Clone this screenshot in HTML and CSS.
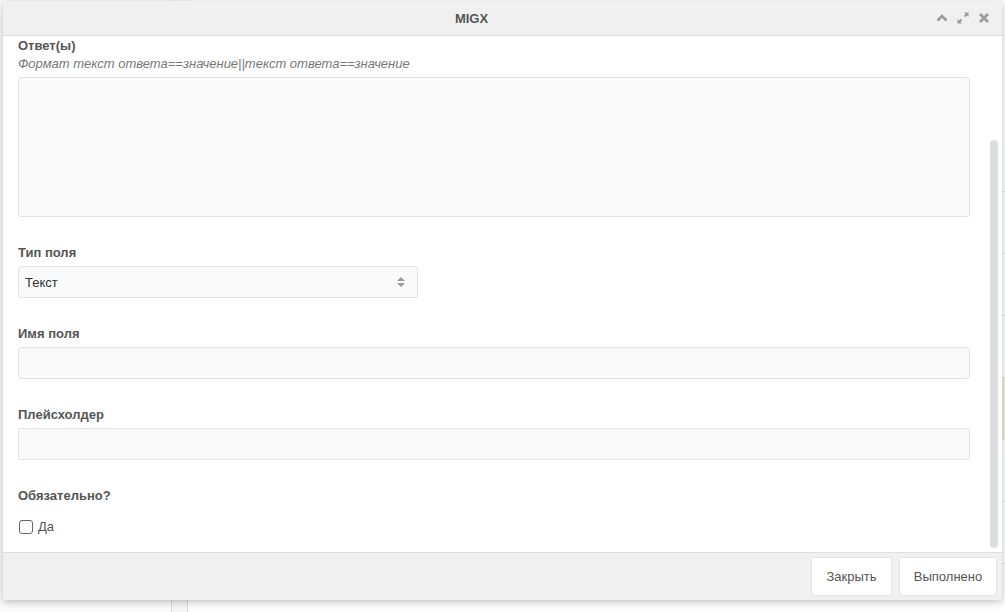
FILE: index.html
```html
<!DOCTYPE html>
<html lang="ru">
  <head>
    <meta charset="UTF-8" />
    <meta name="viewport" content="width=device-width, initial-scale=1.0" />
    <title>MIGX</title>
    <link rel="stylesheet" href="styles.css">
  </head>
  <body>
    <div class="page-behind">
      <div class="col col-left"></div>
      <div class="col col-mid"></div>
      <div class="col col-main">
        <div class="row"></div>
        <div class="row"></div>
        <div class="row"></div>
        <div class="row"></div>
        <div class="row row-hl"></div>
        <div class="row"></div>
        <div class="row"></div>
        <div class="row"></div>
      </div>
    </div>

    <div class="window">
      <div class="window-header">
        <span class="window-title">MIGX</span>
        <div class="window-tools">
          <svg width="14" height="14" viewBox="0 0 14 14">
            <path d="M2.5 9.5 L7 5 L11.5 9.5" fill="none" stroke="#9a9a9a" stroke-width="2.6" />
          </svg>
          <svg width="14" height="14" viewBox="0 0 14 14">
            <path d="M8 1.5 H12.5 V6 Z M6 12.5 H1.5 V8 Z" fill="#9a9a9a" />
            <path d="M11 3 L8.5 5.5 M3 11 L5.5 8.5" stroke="#9a9a9a" stroke-width="1.8" />
          </svg>
          <svg width="14" height="14" viewBox="0 0 14 14">
            <path d="M3 3 L11 11 M11 3 L3 11" stroke="#9a9a9a" stroke-width="2.8" />
          </svg>
        </div>
      </div>

      <div class="window-body">
        <div class="field">
          <label class="field-label">Ответ(ы)</label>
          <div class="field-help">Формат текст ответа==значение||текст ответа==значение</div>
          <textarea class="input textarea" aria-label="Ответ(ы)"></textarea>
        </div>

        <div class="field">
          <label class="field-label">Тип поля</label>
          <div class="input select">
            <span>Текст</span>
            <svg width="10" height="14" viewBox="0 0 10 14">
              <path d="M1 6 L5 2 L9 6 Z M1 8 L5 12 L9 8 Z" fill="#9a9a9a" />
            </svg>
          </div>
        </div>

        <div class="field">
          <label class="field-label">Имя поля</label>
          <input class="input" type="text" aria-label="Имя поля" />
        </div>

        <div class="field">
          <label class="field-label">Плейсхолдер</label>
          <input class="input" type="text" aria-label="Плейсхолдер" />
        </div>

        <div class="field">
          <label class="field-label">Обязательно?</label>
          <div class="check">
            <span class="check-box"></span>
            <span>Да</span>
          </div>
        </div>

        <div class="scroll-thumb"></div>
      </div>

      <div class="window-footer">
        <button class="btn btn-close">Закрыть</button>
        <button class="btn btn-ok">Выполнено</button>
      </div>
    </div>
  </body>
</html>
```

FILE: styles.css
```css
* {
  box-sizing: border-box;
  font-family: "Liberation Sans", Arial, sans-serif;
}

html,
body {
  margin: 0;
  padding: 0;
  height: 100vh;
  overflow: hidden;
  background: #f4f4f4;
  position: relative;
}

.page-behind {
  display: flex;
  height: 100%;
}

.col {
  height: 100%;
}

.col-left {
  width: 172px;
  background: #fbfbfb;
  border-right: 1px solid #dcdcdc;
}

.col-mid {
  width: 16px;
  background: #f6f6f6;
  border-right: 1px solid #dcdcdc;
}

.col-main {
  flex: 1;
  background: #fff;
  padding-top: 130px;
}

.row {
  height: 62px;
  border-bottom: 1px solid #e6e6e6;
}

.row-hl {
  background: #efeedd;
}

.window {
  position: absolute;
  top: 1px;
  left: 3px;
  width: 999px;
  height: 599px;
  background: #fff;
  display: flex;
  flex-direction: column;
  box-shadow: 0 2px 8px rgba(0, 0, 0, 0.25);
}

.window-header {
  height: 35px;
  background: #f0f0f0;
  border-bottom: 1px solid #dedede;
  display: flex;
  align-items: center;
  justify-content: center;
  padding-right: 62px;
  position: relative;
  flex-shrink: 0;
}

.window-title {
  font-size: 13px;
  font-weight: bold;
  color: #555;
}

.window-tools {
  position: absolute;
  right: 11px;
  top: 10px;
  display: flex;
  gap: 7px;
}

.window-body {
  flex: 1;
  position: relative;
  padding: 0 32px 0 15px;
  overflow: hidden;
}

.field {
  display: flex;
  flex-direction: column;
  margin-bottom: 26px;
}

.field-label {
  font-size: 13px;
  line-height: 18px;
  padding-top: 1px;
  font-weight: bold;
  color: #555;
  margin-bottom: 4px;
}

.field-help {
  font-size: 13px;
  line-height: 18px;
  font-style: italic;
  color: #777;
  margin-top: -4px;
  margin-bottom: 4px;
}

.input {
  display: block;
  width: 100%;
  height: 32px;
  background: #fafafa;
  border: 1px solid #e2e2e2;
  border-radius: 3px;
  margin: 0;
  font-size: 13px;
  color: #333;
  outline: none;
}

.textarea {
  height: 140px;
  resize: none;
}

.select {
  width: 400px;
  display: flex;
  align-items: center;
  justify-content: space-between;
  padding: 0 11px 0 6px;
}

.check {
  display: flex;
  align-items: center;
  gap: 5px;
  margin-top: 10px;
  margin-left: 1px;
  font-size: 13px;
  color: #555;
}

.check-box {
  width: 14px;
  height: 14px;
  border: 1.5px solid #666;
  border-radius: 3px;
  background: #fff;
}

.scroll-thumb {
  position: absolute;
  right: 4px;
  top: 104px;
  width: 8px;
  height: 408px;
  border-radius: 4px;
  background: #dcdde0;
}

.window-footer {
  height: 48px;
  flex-shrink: 0;
  background: #f0f0f0;
  border-top: 1px solid #dedede;
  display: flex;
  align-items: center;
  justify-content: flex-end;
  gap: 7px;
  padding-right: 5px;
}

.btn {
  height: 39px;
  background: #fff;
  border: 1px solid #e6e6e6;
  border-radius: 3px;
  font-size: 13px;
  color: #555;
  cursor: pointer;
}

.btn-close {
  width: 81px;
}

.btn-ok {
  width: 98px;
}
```
